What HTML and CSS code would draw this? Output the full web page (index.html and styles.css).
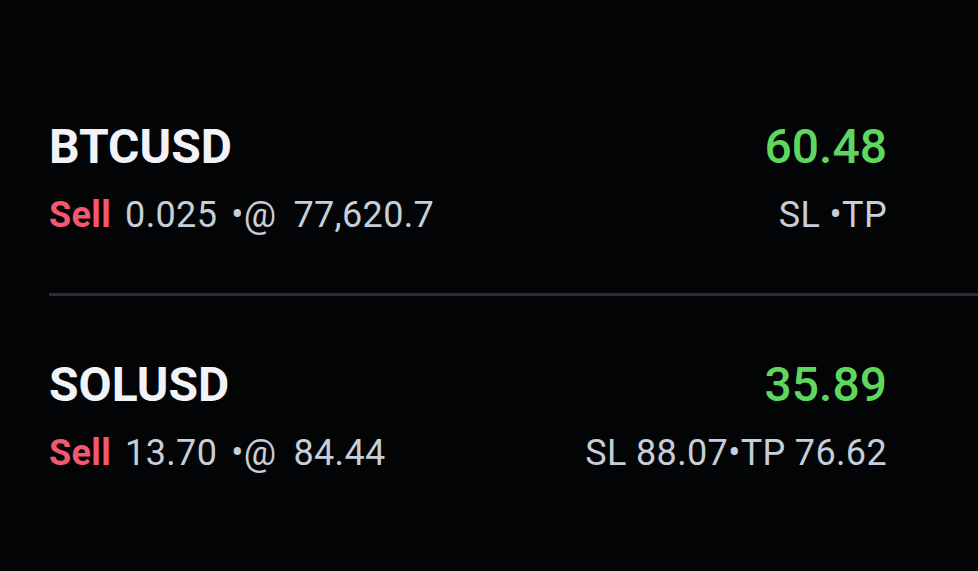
FILE: index.html
```html
<!DOCTYPE html>
<html>
<head>
<meta charset="utf-8">
<link rel="stylesheet" href="styles.css">
</head>
<body>
<div class="list">
  <div class="row">
    <div class="line">
      <span class="symbol">BTCUSD</span>
      <span class="pnl">60.48</span>
    </div>
    <div class="line sub">
      <span class="info"><span class="side">Sell</span><span class="qty">0.025</span><span class="at">•@</span><span class="price">77,620.7</span></span>
      <span class="sltp">SL •TP</span>
    </div>
  </div>
  <div class="row">
    <div class="line">
      <span class="symbol">SOLUSD</span>
      <span class="pnl">35.89</span>
    </div>
    <div class="line sub">
      <span class="info"><span class="side">Sell</span><span class="qty">13.70</span><span class="at">•@</span><span class="price">84.44</span></span>
      <span class="sltp">SL 88.07•TP 76.62</span>
    </div>
  </div>
</div>
</body>
</html>
```

FILE: styles.css
```css
html, body {
  margin: 0;
  padding: 0;
  background: #030406;
  height: 100%;
}
body {
  font-family: Roboto, "Noto Sans", sans-serif;
  overflow: hidden;
}
.list {
  margin-left: 49px;
  padding-top: 58px;
}
.row {
  padding: 61px 91px 56px 0;
  border-bottom: 3px solid #2a2d36;
}
.row:last-child {
  border-bottom: none;
}
.line {
  display: flex;
  justify-content: space-between;
  align-items: baseline;
  font-size: 48px;
  line-height: 56px;
}
.symbol {
  font-weight: 700;
  color: #f1f3f6;
}
.pnl {
  font-weight: 500;
  color: #5fd75f;
}
.sub {
  margin-top: 18px;
  font-size: 36px;
  line-height: 44px;
  letter-spacing: 0.35px;
  color: #c6ced7;
}
.side {
  color: #f2586f;
  font-weight: 700;
}
.qty {
  margin-left: 14px;
}
.at {
  margin-left: 14px;
}
.price {
  margin-left: 17px;
}
```
